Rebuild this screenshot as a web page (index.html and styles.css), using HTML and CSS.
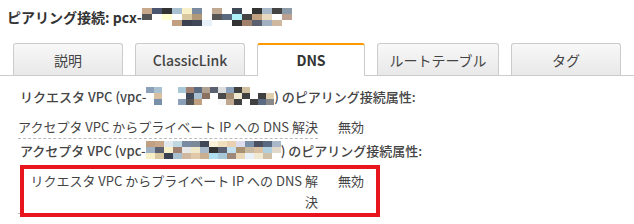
FILE: index.html
```html
<!DOCTYPE html>
<html lang="ja">
<head>
<meta charset="utf-8">
<link rel="stylesheet" href="styles.css">
</head>
<body>
<div class="title">ピアリング接続: pcx-<span class="mosaic m-title"><i style="background:#c8a88a"></i><i style="background:#555"></i><i></i><i style="background:#4a5670"></i><i></i><i></i><i style="background:#333"></i><i style="background:#ffffd0"></i><i></i><i style="background:#a8c0d0"></i><i></i><i style="background:#c0a080"></i><i style="background:#f8f0c8"></i><i style="background:#d8c8a0"></i><i style="background:#3a4050"></i><i style="background:#7a8aa0"></i><i style="background:#b09878"></i><i style="background:#404858"></i><i></i><i></i><i style="background:#e8f0f8"></i><i style="background:#c0a890"></i><i style="background:#555"></i><i></i><i></i><i style="background:#5a6880"></i><i></i><i style="background:#404858"></i><i style="background:#b0f0f8"></i><i style="background:#333"></i><i></i><i style="background:#444"></i><i style="background:#a0806a"></i><i style="background:#333"></i><i style="background:#c0a080"></i><i style="background:#5a6070"></i><i style="background:#a8b8c8"></i><i style="background:#e8d8c0"></i><i style="background:#a0b0c0"></i><i style="background:#444"></i><i></i><i style="background:#d0b8a0"></i><i style="background:#8a9aa8"></i><i style="background:#bba090"></i></span></div>

<div class="tabs">
  <div class="tab">説明</div>
  <div class="tab latin">ClassicLink</div>
  <div class="tab active">DNS</div>
  <div class="tab wide">ルートテーブル</div>
  <div class="tab">タグ</div>
</div>

<div class="content">
  <div class="heading">リクエスタ VPC (vpc-<span class="mosaic m-vpc1"><i style="background:#8aa0b8"></i><i></i><i></i><i style="background:#a8c0d0"></i><i style="background:#d8c0a0"></i><i style="background:#7890a8"></i><i></i><i></i><i></i><i></i><i></i><i></i><i style="background:#a8c8d8"></i><i></i><i style="background:#8aa0b8"></i><i style="background:#a08070"></i><i style="background:#404858"></i><i style="background:#555"></i><i style="background:#5a6a80"></i><i style="background:#a8c0d0"></i><i style="background:#c0a080"></i><i style="background:#b0a090"></i><i style="background:#8a7060"></i><i></i><i style="background:#5a6070"></i><i></i><i></i><i style="background:#ddd"></i><i style="background:#4a4a4a"></i><i style="background:#f8f8f8"></i><i style="background:#8aa0b8"></i><i style="background:#a08a70"></i><i style="background:#c0a890"></i><i style="background:#404040"></i><i style="background:#f0e8d0"></i><i style="background:#404040"></i><i style="background:#d0c0a0"></i><i style="background:#404040"></i><i></i><i></i><i></i><i style="background:#404040"></i><i></i><i style="background:#404040"></i><i style="background:#5a6a80"></i><i></i><i style="background:#e0d0b0"></i><i style="background:#888"></i></span>) のピアリング接続属性:</div>
  <div class="row">
    <div class="label single">アクセプタ VPC からプライベート IP への DNS 解決</div>
    <div class="value">無効</div>
  </div>
  <div class="heading">アクセプタ VPC (vpc-<span class="mosaic m-vpc2"><i style="background:#c0a080"></i><i style="background:#a0b0c0"></i><i style="background:#f8f0c8"></i><i style="background:#c8a88a"></i><i style="background:#5a6070"></i><i style="background:#d8c8a0"></i><i style="background:#e0e8f0"></i><i style="background:#f8f0c8"></i><i style="background:#3a4050"></i><i style="background:#c0d8e0"></i><i style="background:#a08070"></i><i style="background:#a8c0d0"></i><i style="background:#7a8aa0"></i><i style="background:#e8e8e8"></i><i style="background:#d0b8a0"></i><i style="background:#7a8898"></i><i style="background:#f0e8c8"></i><i style="background:#e0c8a8"></i><i style="background:#404858"></i><i style="background:#a8b8c8"></i><i style="background:#c8b090"></i><i style="background:#f8f0d8"></i><i style="background:#333"></i><i style="background:#b0e0f0"></i><i style="background:#f0e0c0"></i><i style="background:#5a6070"></i><i style="background:#a8c8d8"></i><i style="background:#e8d0b0"></i><i style="background:#c0e0f0"></i><i style="background:#a08878"></i><i style="background:#dde"></i><i style="background:#a89070"></i><i style="background:#e8d8b8"></i><i style="background:#7a90a8"></i><i style="background:#c8b8a0"></i><i style="background:#e8f0f8"></i><i style="background:#4a5060"></i><i style="background:#d8c0a0"></i><i style="background:#f0e8d0"></i><i style="background:#5a6a80"></i><i style="background:#b0d0e0"></i><i style="background:#d0c0a8"></i><i style="background:#a8b8c8"></i><i style="background:#e0d8c8"></i></span>) のピアリング接続属性:</div>
  <div class="row boxed">
    <div class="label">リクエスタ VPC からプライベート IP への DNS 解決</div>
    <div class="value">無効</div>
    <div class="highlight"></div>
  </div>
</div>
</body>
</html>
```

FILE: styles.css
```css
* { box-sizing: border-box; }
body {
  margin: 0;
  width: 634px;
  height: 224px;
  overflow: hidden;
  background: #fff;
  color: #444;
  font-family: "Noto Sans CJK JP", "Noto Sans", sans-serif;
  font-size: 13px;
}
.title {
  padding: 5px 0 0 7px;
  height: 28px;
  font-size: 14px;
  font-weight: bold;
  color: #333;
  line-height: 20px;
  display: flex;
  align-items: center;
}
.mosaic {
  display: inline-grid;
  grid-auto-flow: column;
}
.mosaic i { display: block; }
.m-title {
  grid-template-rows: repeat(3, 6px);
  grid-auto-columns: 10px;
}
.m-vpc1 {
  grid-template-rows: repeat(3, 6px);
  grid-auto-columns: 8px;
}
.m-vpc2 {
  grid-template-rows: repeat(3, 6px);
  grid-auto-columns: 9px;
}
.tabs {
  margin-top: 15px;
  display: flex;
  align-items: flex-end;
  gap: 12px;
  padding-left: 13px;
  border-bottom: 1px solid #ccc;
  height: 33px;
}
.tab {
  flex: none;
  width: 110px;
  height: 32px;
  border: 1px solid #ccc;
  border-bottom: none;
  border-radius: 3px 3px 0 0;
  background: linear-gradient(#f8f8f8, #e8e8e8);
  display: flex;
  align-items: center;
  justify-content: center;
  font-size: 14px;
  color: #444;
}
.tab.latin { font-weight: 500; }
.tab.wide { width: 122px; }
.tab.active {
  width: 108px;
  height: 33px;
  margin-bottom: -1px;
  background: #fff;
  border-top: 2px solid #f90;
  font-weight: bold;
  color: #333;
  padding-bottom: 1px;
}
.content {
  padding: 9px 0 0 18px;
}
.heading {
  font-weight: 500;
  color: #444;
  display: flex;
  align-items: center;
  height: 22px;
  padding-left: 2px;
}
.row {
  display: flex;
  align-items: flex-start;
  position: relative;
}
.heading + .row { margin-top: 9px; }
.label {
  flex: none;
  width: 300px;
  text-align: right;
  border-bottom: 1px dashed #bbb;
  line-height: 22px;
}
.label.single { white-space: nowrap; }
.value {
  flex: none;
  margin-left: 20px;
  white-space: nowrap;
  line-height: 22px;
}
.row.boxed .label {
  padding-left: 12px;
  line-height: 21px;
  padding-bottom: 1px;
}
.row.boxed .value { line-height: 21px; }
.highlight {
  position: absolute;
  left: 2px;
  top: -5px;
  width: 360px;
  height: 52px;
  border: 4px solid #e8141e;
}
```
